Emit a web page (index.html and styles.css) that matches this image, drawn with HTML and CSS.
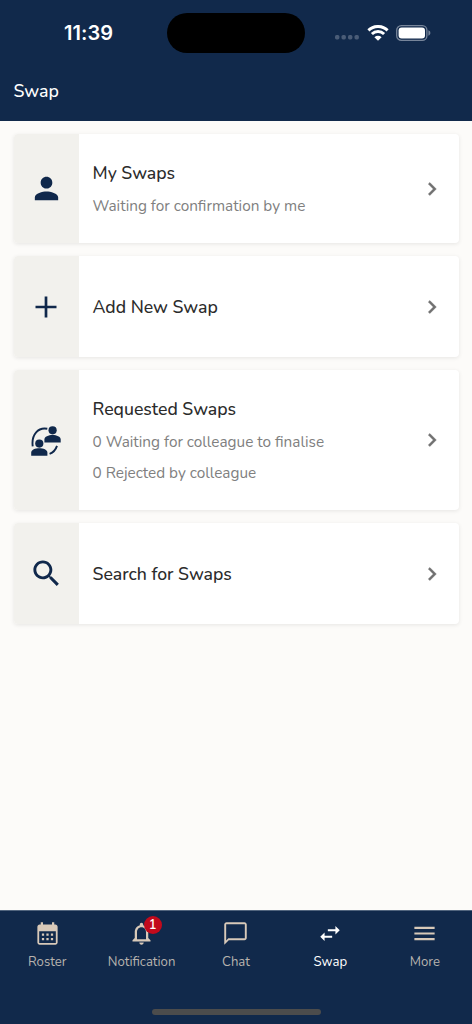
FILE: index.html
```html
<!DOCTYPE html>
<html lang="en">
<head>
<meta charset="utf-8">
<title>Swap</title>
<link rel="stylesheet" href="styles.css">
</head>
<body>
<div class="app">
  <header class="header">
    <div class="status">
      <div class="time">11:39</div>
      <div class="island"></div>
      <div class="signals">
        <svg class="dots" width="24" height="5" viewBox="0 0 24 5"><rect x="0" width="4.4" height="4.4" rx="1.6"/><rect x="6.5" width="4.4" height="4.4" rx="1.6"/><rect x="13" width="4.4" height="4.4" rx="1.6"/><rect x="19.5" width="4.4" height="4.4" rx="1.6"/></svg>
        <svg class="wifi" width="22" height="16" viewBox="0 0 22 16"><path d="M1.4 5.4a13.6 13.6 0 0 1 19.2 0M4.9 9a8.6 8.6 0 0 1 12.2 0" fill="none" stroke="#fff" stroke-width="2.9"/><path d="M11 15.8L7.4 12.2a5.1 5.1 0 0 1 7.2 0z" fill="#fff"/></svg>
        <svg class="battery" width="35" height="16" viewBox="0 0 35 16"><rect x=".7" y=".7" width="30.2" height="14.6" rx="4.6" fill="none" stroke="#77859a" stroke-width="1.3"/><rect x="2.6" y="2.6" width="26.4" height="10.8" rx="3" fill="#fff"/><path d="M32.4 5.3c2.6.8 2.6 4.6 0 5.4z" fill="#77859a"/></svg>
      </div>
    </div>
    <h1 class="title">Swap</h1>
  </header>

  <main class="list">
    <section class="card card-my">
      <div class="tile"><svg width="35" height="35" viewBox="0 0 24 24"><path d="M12 12c2.21 0 4-1.79 4-4s-1.79-4-4-4-4 1.79-4 4 1.79 4 4 4zm0 2c-2.67 0-8 1.34-8 4v2h16v-2c0-2.66-5.33-4-8-4z"/></svg></div>
      <div class="body detailed"><h2 class="name">My Swaps</h2><p class="sub">Waiting for confirmation by me</p></div>
      <svg class="chevron" width="26" height="26" viewBox="0 0 24 24"><path d="M10 6L8.59 7.41 13.17 12l-4.58 4.59L10 18l6-6z"/></svg>
    </section>
    <section class="card card-add">
      <div class="tile"><svg width="36" height="36" viewBox="0 0 24 24"><path d="M19 12.9h-6.1V19h-1.8v-6.1H5v-1.8h6.1V5h1.8v6.1H19z"/></svg></div>
      <div class="body"><h2 class="name">Add New Swap</h2></div>
      <svg class="chevron" width="26" height="26" viewBox="0 0 24 24"><path d="M10 6L8.59 7.41 13.17 12l-4.58 4.59L10 18l6-6z"/></svg>
    </section>
    <section class="card card-requested">
      <div class="tile"><svg width="30" height="31" viewBox="0 -1 30 31"><circle cx="21.6" cy="4.3" r="4.1"/><path d="M13.4 16.5v-3c0-6 16.3-6 16.3 0v3z"/><circle cx="8.3" cy="17.6" r="4.1"/><path d="M.2 29.7v-3c0-5.8 16.2-5.8 16.2 0v3z"/><path d="M16.3 2.8C7.5 1 .2 8.2 1.7 20.3M26 19.9c-1.3 4-3.8 6.6-7.4 7.9" fill="none" stroke="#10284b" stroke-width="1.9"/></svg></div>
      <div class="body detailed"><h2 class="name">Requested Swaps</h2><p class="sub">0 Waiting for colleague to finalise</p><p class="sub">0 Rejected by colleague</p></div>
      <svg class="chevron" width="26" height="26" viewBox="0 0 24 24"><path d="M10 6L8.59 7.41 13.17 12l-4.58 4.59L10 18l6-6z"/></svg>
    </section>
    <section class="card card-search">
      <div class="tile"><svg width="35" height="35" viewBox="0 0 24 24"><path d="M15.5 14h-.79l-.28-.27C15.41 12.59 16 11.11 16 9.5 16 5.91 13.09 3 9.5 3S3 5.91 3 9.5 5.91 16 9.5 16c1.61 0 3.09-.59 4.23-1.57l.27.28v.79l5 4.99L20.49 19l-4.99-5zm-6 0C7.01 14 5 11.99 5 9.5S7.01 5 9.5 5 14 7.01 14 9.5 11.99 14 9.5 14z"/></svg></div>
      <div class="body"><h2 class="name">Search for Swaps</h2></div>
      <svg class="chevron" width="26" height="26" viewBox="0 0 24 24"><path d="M10 6L8.59 7.41 13.17 12l-4.58 4.59L10 18l6-6z"/></svg>
    </section>
  </main>

  <footer class="footer">
    <nav class="tabs">
      <div class="tab"><svg width="27" height="27" viewBox="0 0 24 24"><path d="M19 4h-1V2h-2v2H8V2H6v2H5c-1.1 0-2 .9-2 2v14c0 1.1.9 2 2 2h14c1.1 0 2-.9 2-2V6c0-1.1-.9-2-2-2zm.4 16.4H4.6V10h14.8zM7 12h2v2H7zm4 0h2v2h-2zm4 0h2v2h-2zM7 16h2v2H7zm4 0h2v2h-2zm4 0h2v2h-2z"/></svg><span>Roster</span></div>
      <div class="tab"><div class="bell"><svg width="27" height="27" viewBox="0 0 24 24"><path d="M12 22c1.1 0 2-.9 2-2h-4c0 1.1.9 2 2 2zm6-6v-5c0-3.07-1.63-5.64-4.5-6.32V4c0-.83-.67-1.5-1.5-1.5s-1.5.67-1.5 1.5v.68C7.64 5.36 6 7.92 6 11v5l-2 2v1h16v-1l-2-2zm-2 1H8v-6c0-2.48 1.51-4.5 4-4.5s4 2.02 4 4.5v6z"/></svg><b class="badge">1</b></div><span>Notification</span></div>
      <div class="tab"><svg width="27" height="27" viewBox="0 0 24 24"><path d="M20 2H4c-1.1 0-2 .9-2 2v18l4-4h14c1.1 0 2-.9 2-2V4c0-1.1-.9-2-2-2zm.3 14.3H5.6l-1.9 1.9V3.7h16.6z"/></svg><span>Chat</span></div>
      <div class="tab active"><svg width="26" height="27" viewBox="0 0 24 24"><path d="M21 9l-4-4v3h-7v2h7v3zM7 11l-4 4 4 4v-3h7v-2H7z"/></svg><span>Swap</span></div>
      <div class="tab"><svg width="27" height="27" viewBox="0 0 24 24"><path d="M3 18h18v-1.9H3zm0-5.05h18v-1.9H3zM3 6v1.9h18V6z"/></svg><span>More</span></div>
    </nav>
    <div class="home"></div>
  </footer>
</div>
</body>
</html>
```
FILE: styles.css
```css
* { box-sizing: border-box; margin: 0; padding: 0; }
body { background: #fcfbf9; font-family: Nunito, Lato, "Noto Sans", sans-serif; }
svg { display: block; flex: none; }
.app { width: 472px; height: 1024px; display: flex; flex-direction: column; }

.header { height: 121px; background: #11294b; color: #fff; flex: none; }
.status { height: 66px; display: grid; grid-template-columns: 167px 138px 167px; align-items: center; }
.time { font: 600 20px/24px Inter, sans-serif; padding-left: 64px; letter-spacing: 0.05px; }
.island { height: 40px; border-radius: 20px; background: #000; }
.signals { display: flex; align-items: center; padding-left: 30px; height: 16px; padding-bottom: 1px; }
.dots { fill: #4a5c77; margin-top: 10px; }
.wifi { margin-left: 8px; }
.battery { margin-left: 7px; }
.title { font-size: 17.7px; font-weight: 500; line-height: 24px; margin-top: 13px; padding-left: 13.5px; }

.list { flex: 1; display: flex; flex-direction: column; gap: 13px; padding: 13px 13.5px 0; }
.card { display: flex; align-items: center; background: #fff; border-radius: 4px; overflow: hidden; padding-right: 13.5px; box-shadow: 0 1px 4px rgba(0, 0, 0, 0.09); }
.card-my { height: 109px; }
.card-add { height: 101px; }
.card-requested { height: 140px; }
.card-search { height: 101px; }
.tile { width: 65.5px; align-self: stretch; background: #f2f1ed; display: flex; align-items: center; justify-content: center; fill: #10284b; }
.body { flex: 1; padding-left: 13.5px; white-space: nowrap; }
.name { font-size: 17.65px; font-weight: 500; line-height: 34px; color: #2b2b2b; }
.detailed { padding-top: 1px; }
.detailed .name { margin-bottom: 1px; }
.sub { font-size: 15.33px; line-height: 31px; color: #808080; }
.chevron { fill: #707070; stroke: #707070; stroke-width: 0.4; }

.footer { height: 114px; background: #11294b; border-top: 1px solid #52657e; flex: none; }
.tabs { display: grid; grid-template-columns: repeat(5, 1fr); height: 98px; align-items: start; padding-top: 9px; }
.tab { display: flex; flex-direction: column; align-items: center; gap: 5px; color: #b7b3ae; fill: #d8c9b9; font-size: 13.15px; line-height: 21px; }
.active { color: #fff; fill: #fff; }
.bell { position: relative; }
.badge { position: absolute; left: 15.5px; top: -4.5px; width: 18px; height: 18px; border-radius: 9px; background: #c20a1c; color: #fff; font-size: 13px; font-weight: 600; line-height: 18px; text-align: center; }
.home { width: 169px; height: 6px; border-radius: 3px; background: #4c4c4c; margin: 0 auto; }
```
